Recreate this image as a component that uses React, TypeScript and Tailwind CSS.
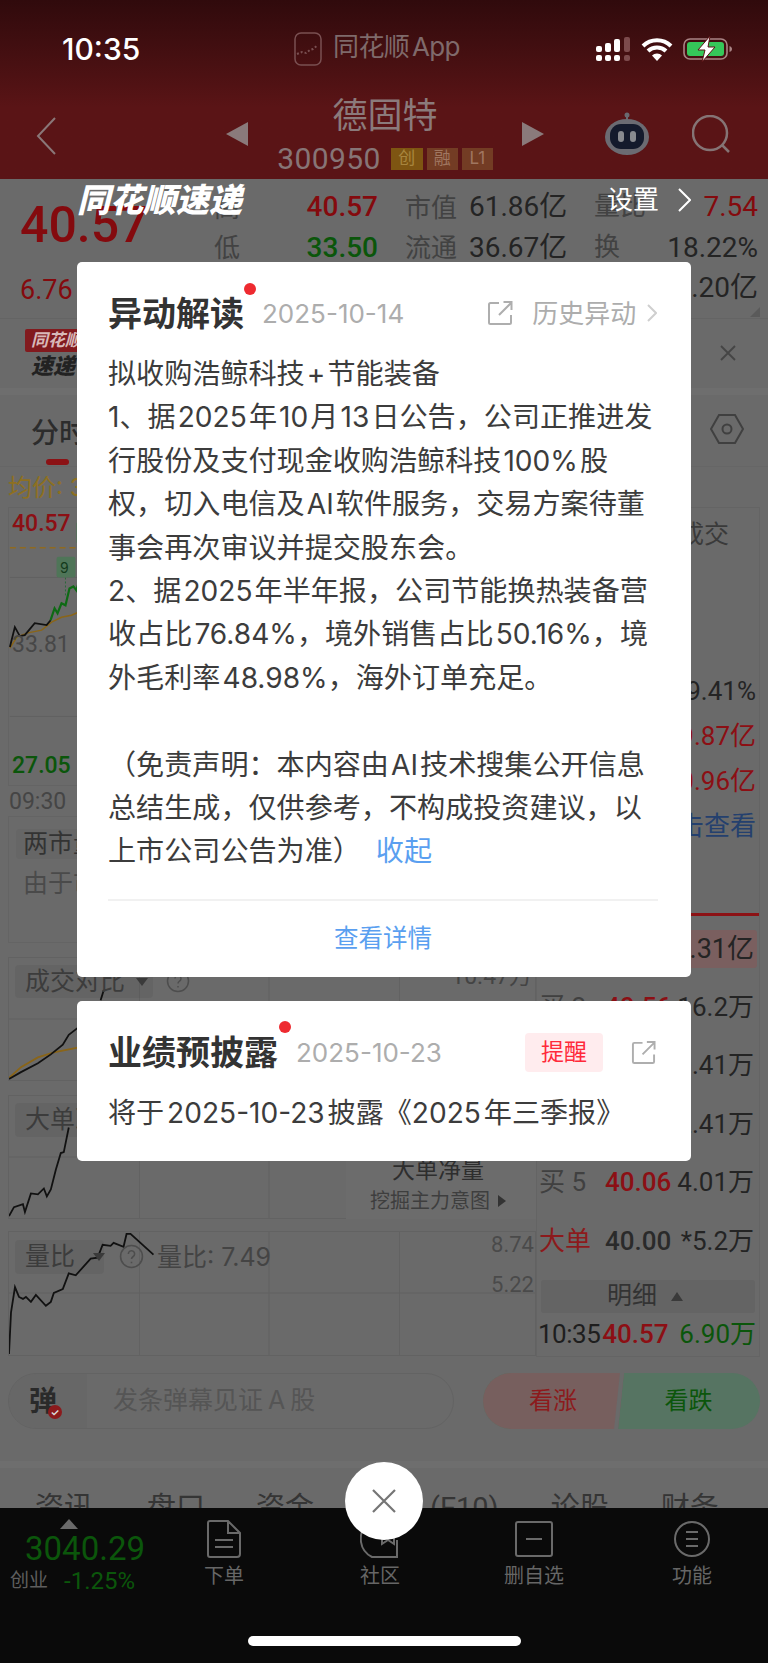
import React from "react";

const ExtIcon = ({ className = "" }: { className?: string }) => (
  <svg viewBox="0 0 26 26" className={className} fill="none" stroke="#aeaeae" strokeWidth="2">
    <path d="M12 3H3.500A1.500 1.500 0 0 0 2 4.500v18A1.500 1.500 0 0 0 3.500 24h19a1.500 1.500 0 0 0 1.500-1.500V15" />
    <path d="M12 15 24 3M16.500 2H24.500V10" />
  </svg>
);

const Q = ({ className = "" }: { className?: string }) => (
  <svg viewBox="0 0 24 24" className={className} fill="none" stroke="#4d4d4d" strokeWidth="1.500">
    <circle cx="12" cy="12" r="10.500" />
    <path d="M9 9.500a3 3 0 1 1 4.600 2.500c-1 .7-1.600 1.200-1.600 2.500M12 17v1.400" />
  </svg>
);

const Tag = ({ children, className = "" }: { children: React.ReactNode; className?: string }) => (
  <div className={"flex items-center whitespace-nowrap rounded-[4px] bg-black/[0.05] text-[25px] text-[#3c3c3c] " + className}>{children}</div>
);

const Caret = () => (
  <svg viewBox="0 0 12 8" className="h-[8px] w-[12px]"><path d="M0 0h12L6 8z" fill="#3a3a3a" /></svg>
);

const lines1 = [
  "拟收购浩鲸科技 + 节能装备",
  "1、据 2025 年 10 月 13 日公告，公司正推进发",
  "行股份及支付现金收购浩鲸科技 100% 股",
  "权，切入电信及 AI 软件服务，交易方案待董",
  "事会再次审议并提交股东会。",
  "2、据 2025 年半年报，公司节能换热装备营",
  "收占比 76.84%，境外销售占比 50.16%，境",
  "外毛利率 48.98%，海外订单充足。",
  " ",
  "（免责声明：本内容由 AI 技术搜集公开信息",
  "总结生成，仅供参考，不构成投资建议，以",
];

const Panel = ({ h, children, vb, className = "" }: { h: number; children?: React.ReactNode; vb: number; className?: string }) => (
  <div className={"relative border border-[#626262] " + className} style={{ height: h }}>
    <svg className="absolute inset-0 h-full w-full" viewBox={`8 ${vb} 528 ${h}`} preserveAspectRatio="none" fill="none">
      <path d={`M139 ${vb}v${h}M269 ${vb}v${h}M400 ${vb}v${h}`} stroke="#626262" />
      <path d={`M8 ${vb + 62}h528`} stroke="#626262" />
      {children}
    </svg>
  </div>
);

const Row = ({ a, b, c, bc = "text-[#2a2a2a]", ac = "text-[#404040]" }: { a: string; b: string; c: string; bc?: string; ac?: string }) => (
  <div className="flex h-[58.5px] items-center whitespace-nowrap pl-[2px] pr-[5px] font-['Roboto','Noto_Sans_CJK_SC',sans-serif] text-[26px]">
    <span className={ac + " w-[66px]"}>{a}</span>
    <span className={bc + " font-medium"}>{b}</span>
    <span className="ml-auto text-right text-[#242424]">{c}</span>
  </div>
);

const Val = ({ t, c = "text-[#242424]" }: { t: string; c?: string }) => (
  <div className={"flex h-[45px] items-center justify-end whitespace-nowrap pr-[3px] font-['Roboto','Noto_Sans_CJK_SC',sans-serif] text-[26px] " + c}>{t}</div>
);

const NavItem = ({ icon, label }: { icon: React.ReactNode; label: string }) => (
  <div className="flex flex-col items-center text-[#666]">
    <div className="flex h-[40px] items-center justify-center">{icon}</div>
    <span className="mt-[3px] text-[20px] leading-[28px]">{label}</span>
  </div>
);

export default function App() {
  return (
    <div lang="zh-CN" className="relative h-[1663px] w-[768px] overflow-hidden bg-[#6a6a6a] font-['Inter','Noto_Sans_CJK_SC',sans-serif]">
      {/* header */}
      <header className="h-[179px] bg-linear-to-b from-[#300a0c] to-[#5a1416] to-60% px-[36px]">
        <div className="flex h-[90px] items-start pt-[28px]">
          <span className="ml-[26px] w-[232px] text-[30px] font-medium leading-[42px] text-white">10:35</span>
          <svg viewBox="0 0 28 42" className="h-[42px] w-[28px]" fill="none">
            <rect x="1" y="5" width="26" height="32" rx="6" stroke="#7a5052" strokeWidth="1.500" />
            <path d="M3 26l5-2 4 1 4-3 3-1 5-4" stroke="#7a5052" strokeWidth="2" strokeDasharray="2 2" />
          </svg>
          <span className="ml-[11px] text-[26px] leading-[38px] tracking-[-0.6px] [word-spacing:-4px] text-[#7f6a6b]">同花顺 App</span>
          <div className="ml-auto mr-[-1px] mt-[8px] flex items-center">
            <svg viewBox="0 0 34 24" className="h-[24px] w-[34px]" fill="#fff">
              <rect x="0" y="9" width="6" height="6" rx="2" /><rect x="9" y="6" width="6" height="9" rx="2" /><rect x="18" y="2" width="6" height="13" rx="2" /><rect x="28" y="0" width="6" height="15" rx="2" fill="#7c4a4c" />
              <rect x="0" y="18" width="6" height="6" rx="2" /><rect x="9" y="18" width="6" height="6" rx="2" /><rect x="18" y="18" width="6" height="6" rx="2" /><rect x="28" y="18" width="6" height="6" rx="2" fill="#7c4a4c" />
            </svg>
            <svg viewBox="0 0 32 24" className="ml-[11px] h-[24px] w-[32px]" fill="none" stroke="#fff" strokeWidth="4">
              <path d="M2 9a20 20 0 0 1 28 0M7 14a13 13 0 0 1 18 0" />
              <path d="M11 18.500a7 7 0 0 1 10 0L16 24z" fill="#fff" stroke="none" />
            </svg>
            <svg viewBox="0 0 50 26" className="ml-[10px] h-[26px] w-[50px]" fill="none">
              <rect x="1" y="3" width="43" height="20" rx="6" stroke="#a98485" strokeWidth="1.600" />
              <rect x="4" y="6" width="37" height="14" rx="3" fill="#35c759" />
              <path d="M46.500 10v6c1.500-.5 2.500-1.500 2.500-3s-1-2.500-2.500-3z" fill="#a98485" />
              <path d="M27 0 15 14h7l-3 12 13-15h-7l2-11z" fill="#fff" stroke="#5a1416" strokeWidth="1" />
            </svg>
          </div>
        </div>
        <div className="flex h-[89px] items-start">
          <svg viewBox="0 0 20 38" className="mt-[27px] h-[38px] w-[20px]" fill="none" stroke="#8a7778" strokeWidth="2">
            <path d="M19 1 2 19l17 18" />
          </svg>
          <svg viewBox="0 0 22 24" className="ml-[170px] mt-[32px] h-[24px] w-[22px]"><path d="M22 0v24L0 12z" fill="#8a7a7b" /></svg>
          <div className="ml-[31px] flex w-[212px] flex-col items-center pt-[2px]">
            <span className="text-[35px] leading-[46px] text-[#8b7a7b]">德固特</span>
            <div className="mt-[3px] flex items-center">
              <span className="font-['Roboto',sans-serif] text-[30px] leading-[36px] text-[#877576] tracking-[0.4px]">300950</span>
              <span className="ml-[10px] flex h-[22px] w-[32px] items-center justify-center bg-[#7e5512] text-[17px] text-[#a8853e]">创</span>
              <span className="ml-[4px] flex h-[22px] w-[31px] items-center justify-center bg-[#733c24] text-[17px] text-[#a07660]">融</span>
              <span className="ml-[4px] flex h-[22px] w-[31px] items-center justify-center bg-[#733c24] text-[17px] text-[#a07660]">L1</span>
            </div>
          </div>
          <svg viewBox="0 0 22 24" className="ml-[31px] mt-[32px] h-[24px] w-[22px]"><path d="M0 0v24L22 12z" fill="#8a7a7b" /></svg>
          <svg viewBox="0 0 48 44" className="ml-[59px] mt-[22px] h-[44px] w-[48px]">
            <circle cx="24" cy="3" r="2.500" fill="#6a6a70" />
            <path d="M24 4v6" stroke="#6a6a70" strokeWidth="2" />
            <ellipse cx="24" cy="25" rx="22" ry="18" fill="#6b6b72" />
            <rect x="7" y="12" width="34" height="25" rx="11" fill="#141a2c" />
            <rect x="15" y="19" width="6" height="11" rx="3" fill="#888a8f" />
            <rect x="27" y="19" width="6" height="11" rx="3" fill="#888a8f" />
          </svg>
          <svg viewBox="0 0 40 40" className="ml-[41px] mt-[25px] h-[40px] w-[40px]" fill="none" stroke="#857475" strokeWidth="2.500">
            <circle cx="18" cy="18" r="17" /><path d="M30 30l7 7" />
          </svg>
        </div>
      </header>

      {/* quote */}
      <section className="relative flex h-[139px] pl-[20px] pt-[8px] text-[26px] text-[#424242]">
        <div className="w-[194px] font-['Roboto',sans-serif] text-[#840a0e]">
          <div className="mt-[4px] text-[50px] font-medium leading-[68px]">40.57</div>
          <div className="mt-[14px] text-[27px] leading-[34px]">6.76</div>
        </div>
        <div className="grid auto-rows-[40.5px] grid-cols-[52px_112px_91px_125px_164px] items-center">
          <span>高</span><span className="text-right font-['Roboto',sans-serif] text-[28px] font-medium text-[#840a0e]">40.57</span>
          <span className="pl-[27px]">市值</span><span className="font-['Roboto','Noto_Sans_CJK_SC',sans-serif] text-[28px] text-[#242424]">61.86亿</span>
          <span className="flex justify-between"><span>量比</span><span className="font-['Roboto',sans-serif] text-[28px] text-[#840a0e]">7.54</span></span>
          <span>低</span><span className="text-right font-['Roboto',sans-serif] text-[28px] font-medium text-[#0b560b]">33.50</span>
          <span className="pl-[27px]">流通</span><span className="font-['Roboto','Noto_Sans_CJK_SC',sans-serif] text-[28px] text-[#242424]">36.67亿</span>
          <span className="flex justify-between"><span>换</span><span className="font-['Roboto',sans-serif] text-[28px] text-[#242424]">18.22%</span></span>
          <span /><span /><span /><span />
          <span className="flex justify-end font-['Roboto','Noto_Sans_CJK_SC',sans-serif] text-[28px] text-[#242424]">25.20亿</span>
        </div>
        <svg viewBox="0 0 10 10" className="absolute bottom-[1px] right-[8px] h-[10px] w-[10px]"><path d="M10 0v10H0z" fill="#5a5a5a" /></svg>
      </section>

      {/* banner */}
      <section className="relative h-[70px] border-t border-[#646464] pl-[25px] pt-[10px]">
        <div className="flex h-[23px] w-[60px] items-center rounded-[2px] bg-[#821a1e] pl-[6px] text-[17px] font-bold italic text-[#d8b8b8]">同花顺</div>
        <div className="pl-[6px] text-[22px] font-black italic leading-[28px] text-[#222]">速递</div>
        <svg viewBox="0 0 16 16" className="absolute right-[32px] top-[26px] h-[16px] w-[16px]" fill="none" stroke="#454545" strokeWidth="1.800"><path d="M1 1l14 14M15 1 1 15" /></svg>
      </section>
      <div className="h-[7px] bg-[#6e6e6e]" />

      {/* period tabs */}
      <section className="relative flex h-[72px] items-start justify-between border-b border-[#666] pl-[31px] pr-[24px] pt-[19px]">
        <span className="text-[28px] font-medium leading-[38px] text-[#2c2c2c]">分时</span>
        <span className="absolute bottom-[1px] left-[46px] h-[6px] w-[23px] rounded-full bg-[#8c1215]" />
        <svg viewBox="0 0 34 30" className="h-[30px] w-[34px]" fill="none" stroke="#404040" strokeWidth="2"><path d="M9 1h16l8 14-8 14H9L1 15z" /><circle cx="17" cy="15" r="4.500" /></svg>
      </section>

      {/* main */}
      <main className="flex h-[890px]">
        <div className="ml-[8px] w-[528px]">
          <div className="h-[40px] text-[24px] leading-[42px] text-[#8e7020]">均价: 37.2</div>
          <div className="relative h-[279px] border border-[#646464]">
            <svg className="absolute inset-0 h-full w-full" viewBox="8 507 528 279" fill="none">
              <path d="M8 547h70" stroke="#8f6a20" strokeWidth="1.500" strokeDasharray="6 4" />
              <path d="M8 577h70M8 717h70" stroke="#626262" />
              <path d="M8 648 15 637 25 633 40 630 50 622 60 617 70 615 77 612" stroke="#8a6518" strokeWidth="1.500" />
              <path d="M8 647 13 627 18 636 23 635 33 623 45 625 49 620" stroke="#111" strokeWidth="1.800" />
              <path d="M49 620 53 608 56 613 60 603 64 605 68 588 72 586 75 590 77 583" stroke="#0e6a14" strokeWidth="2.200" />
              <path d="M64 577v18" stroke="#2a6a3a" strokeDasharray="2 2" />
              <rect x="55" y="556" width="19" height="21" rx="2" fill="#4f7558" />
              <rect x="75" y="522" width="3" height="20" fill="#4f7558" />
            </svg>
            <span className="absolute left-[3px] top-[2px] font-['Roboto',sans-serif] text-[23px] font-medium leading-[28px] text-[#8c0f14]">40.57</span>
            <span className="absolute left-[51px] top-[51px] text-[14px] leading-[18px] text-[#143a1c]">9</span>
            <span className="absolute left-[3px] top-[123px] font-['Roboto',sans-serif] text-[23px] leading-[28px] text-[#474747]">33.81</span>
            <span className="absolute bottom-[5px] left-[3px] font-['Roboto',sans-serif] text-[23px] font-medium leading-[28px] text-[#0b560b]">27.05</span>
          </div>
          <div className="h-[30px] pl-[1px] font-['Roboto',sans-serif] text-[23px] leading-[32px] text-[#454545]">09:30</div>
          <div className="h-[127px] border border-[#646464] pl-[7px] pt-[12px]">
            <div className="flex h-[30px] w-[200px] items-center rounded-[4px] bg-[#666] pl-[7px] text-[25px] text-[#333]">两市量能缩减</div>
            <div className="mt-[6px] pl-[7px] text-[25px] leading-[36px] text-[#4a4a4a]">由于市场情绪回落</div>
          </div>

          <div className="mt-[14px]">
            <div className="relative">
              <Panel h={124} vb={957}>
                <path d="M100 1000 103 990" stroke="#111" strokeWidth="1.800" />
                <path d="M8 1079 20 1068 37 1058 53 1053 77 1048" stroke="#8a6518" strokeWidth="1.800" />
                <path d="M8 1080 20 1073 37 1064 50 1055 62 1045 68 1035 77 1028" stroke="#111" strokeWidth="1.800" />
              </Panel>
              <Tag className="absolute left-[7px] top-[8px] h-[33px] w-[138px] pl-[10px]">成交对比<span className="ml-[11px]"><Caret /></span></Tag>
              <Q className="absolute left-[158px] top-[12px] h-[24px] w-[24px]" />
              <span className="absolute right-[4px] top-[6px] font-['Roboto','Noto_Sans_CJK_SC',sans-serif] text-[23px] leading-[28px] text-[#444]">10.47万</span>
            </div>
            <div className="relative mt-[14px]">
              <Panel h={124} vb={1095}>
                <path d="M8 1217 13 1208 22 1205 24 1213 30 1194 37 1195 43 1189 46 1197 50 1190 55 1170 60 1153 63 1152 68 1127" stroke="#111" strokeWidth="1.800" />
              </Panel>
              <Tag className="absolute left-[7px] top-[8px] h-[34px] w-[138px] pl-[10px]">大单净量</Tag>
              <div className="absolute bottom-0 right-0 flex h-[70px] w-[190px] flex-col items-center bg-[#6c6c6c] pr-[6px] pt-[5px]">
                <span className="text-[23px] leading-[32px] text-[#2e2e2e]">大单净量</span>
                <span className="flex items-center text-[20px] leading-[30px] text-[#3e3e3e]">挖掘主力意图<svg viewBox="0 0 8 12" className="ml-[8px] h-[12px] w-[8px]"><path d="M0 0l8 6-8 6z" fill="#333" /></svg></span>
              </div>
            </div>
            <div className="relative mt-[12px]">
              <Panel h={125} vb={1231}>
                <path d="M8 1355 10 1313 14 1287 18 1297 22 1299 25 1297 30 1302 35 1295 45 1306 50 1302 53 1293 62 1289 68 1273 75 1275 90 1258 97 1257 102 1244 110 1245 113 1242 123 1246 126 1233 130 1233 153 1254" stroke="#111" strokeWidth="1.800" />
              </Panel>
              <Tag className="absolute left-[7px] top-[9px] h-[34px] w-[89px] pl-[10px]">量比<span className="ml-[18px]"><Caret /></span></Tag>
              <Q className="absolute left-[111px] top-[13px] h-[25px] w-[25px]" />
              <span className="absolute left-[149px] top-[8px] text-[25px] leading-[36px] text-[#444]">量比: 7.49</span>
              <span className="absolute right-[2px] top-[0px] font-['Roboto',sans-serif] text-[22px] leading-[28px] text-[#4a4a4a]">8.74</span>
              <span className="absolute right-[2px] top-[40px] font-['Roboto',sans-serif] text-[22px] leading-[28px] text-[#4a4a4a]">5.22</span>
            </div>
          </div>
        </div>

        <div className="mt-[40px] h-[850px] w-[224px] border border-[#646464]">
          <div className="h-[46px] pr-[30px] text-right text-[25px] leading-[52px] text-[#3a3a3a]">成交</div>
          <div className="mt-[115px]">
            <Val t="换手 9.41%" />
            <Val t="39.87亿" c="text-[#8c0f14]" />
            <Val t="20.96亿" c="text-[#8c0f14]" />
            <Val t="点击查看" c="text-[#24406e]" />
          </div>
          <div className="mt-[64px] h-[3px] bg-[#8c1215]" />
          <div className="mx-[2px] mt-[14px] flex h-[38px] items-center justify-end rounded-[3px] bg-[#7a5f5f] pr-[3px] font-['Roboto','Noto_Sans_CJK_SC',sans-serif] text-[27px] text-[#242424]">15.31亿</div>
          <div className="mt-[10px]">
            <Row a="买 2" b="40.56" bc="text-[#8c0f14]" c="16.2万" />
            <Row a="买 3" b="40.55" bc="text-[#8c0f14]" c="0.41万" />
            <Row a="买 4" b="40.20" bc="text-[#8c0f14]" c="2.41万" />
            <Row a="买 5" b="40.06" bc="text-[#8c0f14]" c="4.01万" />
            <Row a="大单" ac="text-[#8c1a1c]" b="40.00" c="*5.2万" />
          </div>
          <div className="mx-[4px] mt-[9px] flex h-[33px] items-center justify-center rounded-[3px] bg-[#646464] pr-[6px] text-[25px] text-[#333]">明细<svg viewBox="0 0 12 9" className="ml-[14px] h-[9px] w-[12px]"><path d="M6 0l6 9H0z" fill="#3a3a3a" /></svg></div>
          <div className="flex h-[44px] items-center whitespace-nowrap pl-[1px] pr-[3px] font-['Roboto','Noto_Sans_CJK_SC',sans-serif] text-[26px]">
            <span className="tracking-[-0.5px] text-[#1e1e1e]">10:35</span><span className="ml-[2px] font-medium text-[#8c0f14]">40.57</span><span className="ml-auto text-[#0b560b]">6.90万</span>
          </div>
        </div>
      </main>

      {/* danmu */}
      <section className="mt-[16px] flex h-[56px] pl-[8px] pr-[8px]">
        <div className="flex w-[446px] overflow-hidden rounded-full border border-[#636363]">
          <div className="relative flex w-[78px] items-center justify-center bg-[#676767] pr-[10px] text-[28px] font-bold text-[#2a2a2a]">
            弹
            <span className="absolute bottom-[9px] left-[39px] flex h-[14px] w-[14px] items-center justify-center rounded-full bg-[#8c1a1c] text-[10px] leading-none text-[#ddd]">✓</span>
          </div>
          <span className="ml-[26px] self-center text-[25px] [word-spacing:-2px] text-[#555]">发条弹幕见证 A 股</span>
        </div>
        <div className="ml-[29px] flex h-[56px] w-[277px] overflow-hidden rounded-full bg-[#567462]">
          <div className="ml-[-10px] flex h-full w-[148px] -skew-x-6 items-center justify-center border-r-[4px] border-[#6a6a6a] bg-[#775f5e] pl-[16px]">
            <span className="skew-x-6 text-[24px] text-[#8c1a1c]">看涨</span>
          </div>
          <div className="flex flex-1 items-center justify-center pr-[4px] text-[24px] text-[#0b560b]">看跌</div>
        </div>
      </section>

      <div className="mt-[32px] h-[7px] bg-[#6e6e6e]" />
      <section className="h-[40px] overflow-hidden pl-[35px] pt-[21px]">
        <div className="flex text-[29px] leading-[38px] text-[#353535]">
          <span>资讯</span><span className="ml-[54px]">盘口</span><span className="ml-[51px]">资金</span><span className="ml-[116px] font-['Roboto',sans-serif]">(F10)</span><span className="ml-[52px]">论股</span><span className="ml-[52px]">财务</span>
        </div>
      </section>

      {/* bottom bar */}
      <footer className="relative flex h-[155px] items-start bg-[#0a0a0a] pt-[11px]">
        <div className="w-[170px] pl-[10px]">
          <svg viewBox="0 0 18 10" className="ml-[50px] h-[10px] w-[18px]"><path d="M9 0l9 10H0z" fill="#6a6a6a" /></svg>
          <div className="ml-[15px] font-['Roboto',sans-serif] text-[33px] leading-[40px] text-[#0b560b]">3040.29</div>
          <div className="mt-[-3px] flex items-center leading-[30px]">
            <span className="text-[19px] text-[#5e5e5e]">创业</span>
            <span className="ml-[16px] font-['Roboto',sans-serif] text-[24px] text-[#0b560b]">-1.25%</span>
          </div>
        </div>
        <div className="ml-[34px]">
          <NavItem label="下单" icon={
            <svg viewBox="0 0 34 38" className="h-[38px] w-[34px]" fill="none" stroke="#6a6a6a" strokeWidth="2">
              <path d="M3 1h18l12 12v21a3 3 0 0 1-3 3H3a2 2 0 0 1-2-2V3a2 2 0 0 1 2-2zM21 1v12h12M8 20h18M8 27h18" />
            </svg>} />
        </div>
        <div className="ml-[116px]">
          <NavItem label="社区" icon={
            <svg viewBox="0 0 40 38" className="h-[38px] w-[40px]" fill="none" stroke="#6a6a6a" strokeWidth="2">
              <path d="M7 2C2 8 0 14 1 22c1 7 5 12 11 15h25V20M12 2v12M22 12l6 3 6-3v12l-6-4-6 4z" />
            </svg>} />
        </div>
        <div className="ml-[104px]">
          <NavItem label="删自选" icon={
            <svg viewBox="0 0 38 36" className="h-[36px] w-[38px]" fill="none" stroke="#6a6a6a" strokeWidth="2">
              <rect x="1" y="1" width="36" height="34" rx="2" /><path d="M11 18h16" />
            </svg>} />
        </div>
        <div className="ml-[108px]">
          <NavItem label="功能" icon={
            <svg viewBox="0 0 36 36" className="h-[36px] w-[36px]" fill="none" stroke="#6a6a6a" strokeWidth="2">
              <circle cx="18" cy="18" r="17" /><path d="M12 11h12M12 18h12M12 25h12" />
            </svg>} />
        </div>
      </footer>

      {/* overlays */}
      <div className="absolute left-[77px] top-[179px] w-[600px] text-[33px] font-black italic leading-[42px] text-white">同花顺速递</div>
      <div className="absolute left-[607px] top-[182px] flex items-center text-[26px] leading-[36px] text-white">
        设置
        <svg viewBox="0 0 14 24" className="ml-[18px] h-[24px] w-[14px]" fill="none" stroke="#fff" strokeWidth="2"><path d="M2 1l11 11L2 23" /></svg>
      </div>

      <div className="absolute left-[77px] top-[262px] h-[715px] w-[614px] rounded-[5px] bg-white pl-[31px] pr-[33px] pt-[30px] text-[#3c3c3c]">
        <div className="relative flex h-[42px] items-center whitespace-nowrap">
          <span className="text-[34px] font-bold text-[#333]">异动解读</span>
          <span className="absolute left-[136px] top-[-9px] h-[12px] w-[12px] rounded-full bg-[#ee2a30]" />
          <span className="ml-[18px] text-[26px] text-[#adadad]">2025-10-14</span>
          <ExtIcon className="ml-[83px] h-[26px] w-[26px]" />
          <span className="ml-[19px] text-[26px] text-[#adadad]">历史异动</span>
          <svg viewBox="0 0 10 18" className="ml-[11px] h-[18px] w-[10px]" fill="none" stroke="#cfcfcf" strokeWidth="2"><path d="M1 1l8 8-8 8" /></svg>
        </div>
        <div className="mt-[19px] whitespace-pre text-[28.1px] leading-[43.4px] [word-spacing:-5.8px]">
          {lines1.map((l, i) => <div key={i} className="h-[43.4px]">{l}</div>)}
          <div className="flex h-[43.4px]">上市公司公告为准）<span className="ml-[15px] text-[#5a9ff0]">收起</span></div>
        </div>
        <div className="mt-[25px] h-[2px] bg-[#f1f1f1]" />
        <div className="flex h-[76px] items-center justify-center text-[24.5px] text-[#5a9ff0]">查看详情</div>
      </div>

      <div className="absolute left-[77px] top-[1001px] h-[160px] w-[614px] rounded-[5px] bg-white pl-[31px] pr-[33px] pt-[30px] text-[#3c3c3c]">
        <div className="relative flex h-[42px] items-center whitespace-nowrap">
          <span className="text-[34px] font-bold text-[#333]">业绩预披露</span>
          <span className="absolute left-[171px] top-[-10px] h-[12px] w-[12px] rounded-full bg-[#ee2a30]" />
          <span className="ml-[18px] text-[26px] text-[#adadad]">2025-10-23</span>
          <span className="ml-auto flex h-[39px] w-[78px] items-center justify-center rounded-[4px] bg-[#ffecee] text-[23px] text-[#ff2a3a]">提醒</span>
          <ExtIcon className="ml-[28px] mr-[2px] h-[25px] w-[25px]" />
        </div>
        <div className="mt-[20px] whitespace-nowrap text-[28.1px] leading-[40px] [word-spacing:-5px]">将于 2025-10-23 披露《2025 年三季报》</div>
      </div>

      <div className="absolute left-[345px] top-[1462px] flex h-[78px] w-[78px] items-center justify-center rounded-full bg-white">
        <svg viewBox="0 0 24 24" className="h-[24px] w-[24px]" fill="none" stroke="#757575" strokeWidth="2.200"><path d="M1 1l22 22M23 1 1 23" /></svg>
      </div>
      <div className="absolute bottom-[17px] left-[248px] h-[10px] w-[273px] rounded-full bg-white" />
    </div>
  );
}
